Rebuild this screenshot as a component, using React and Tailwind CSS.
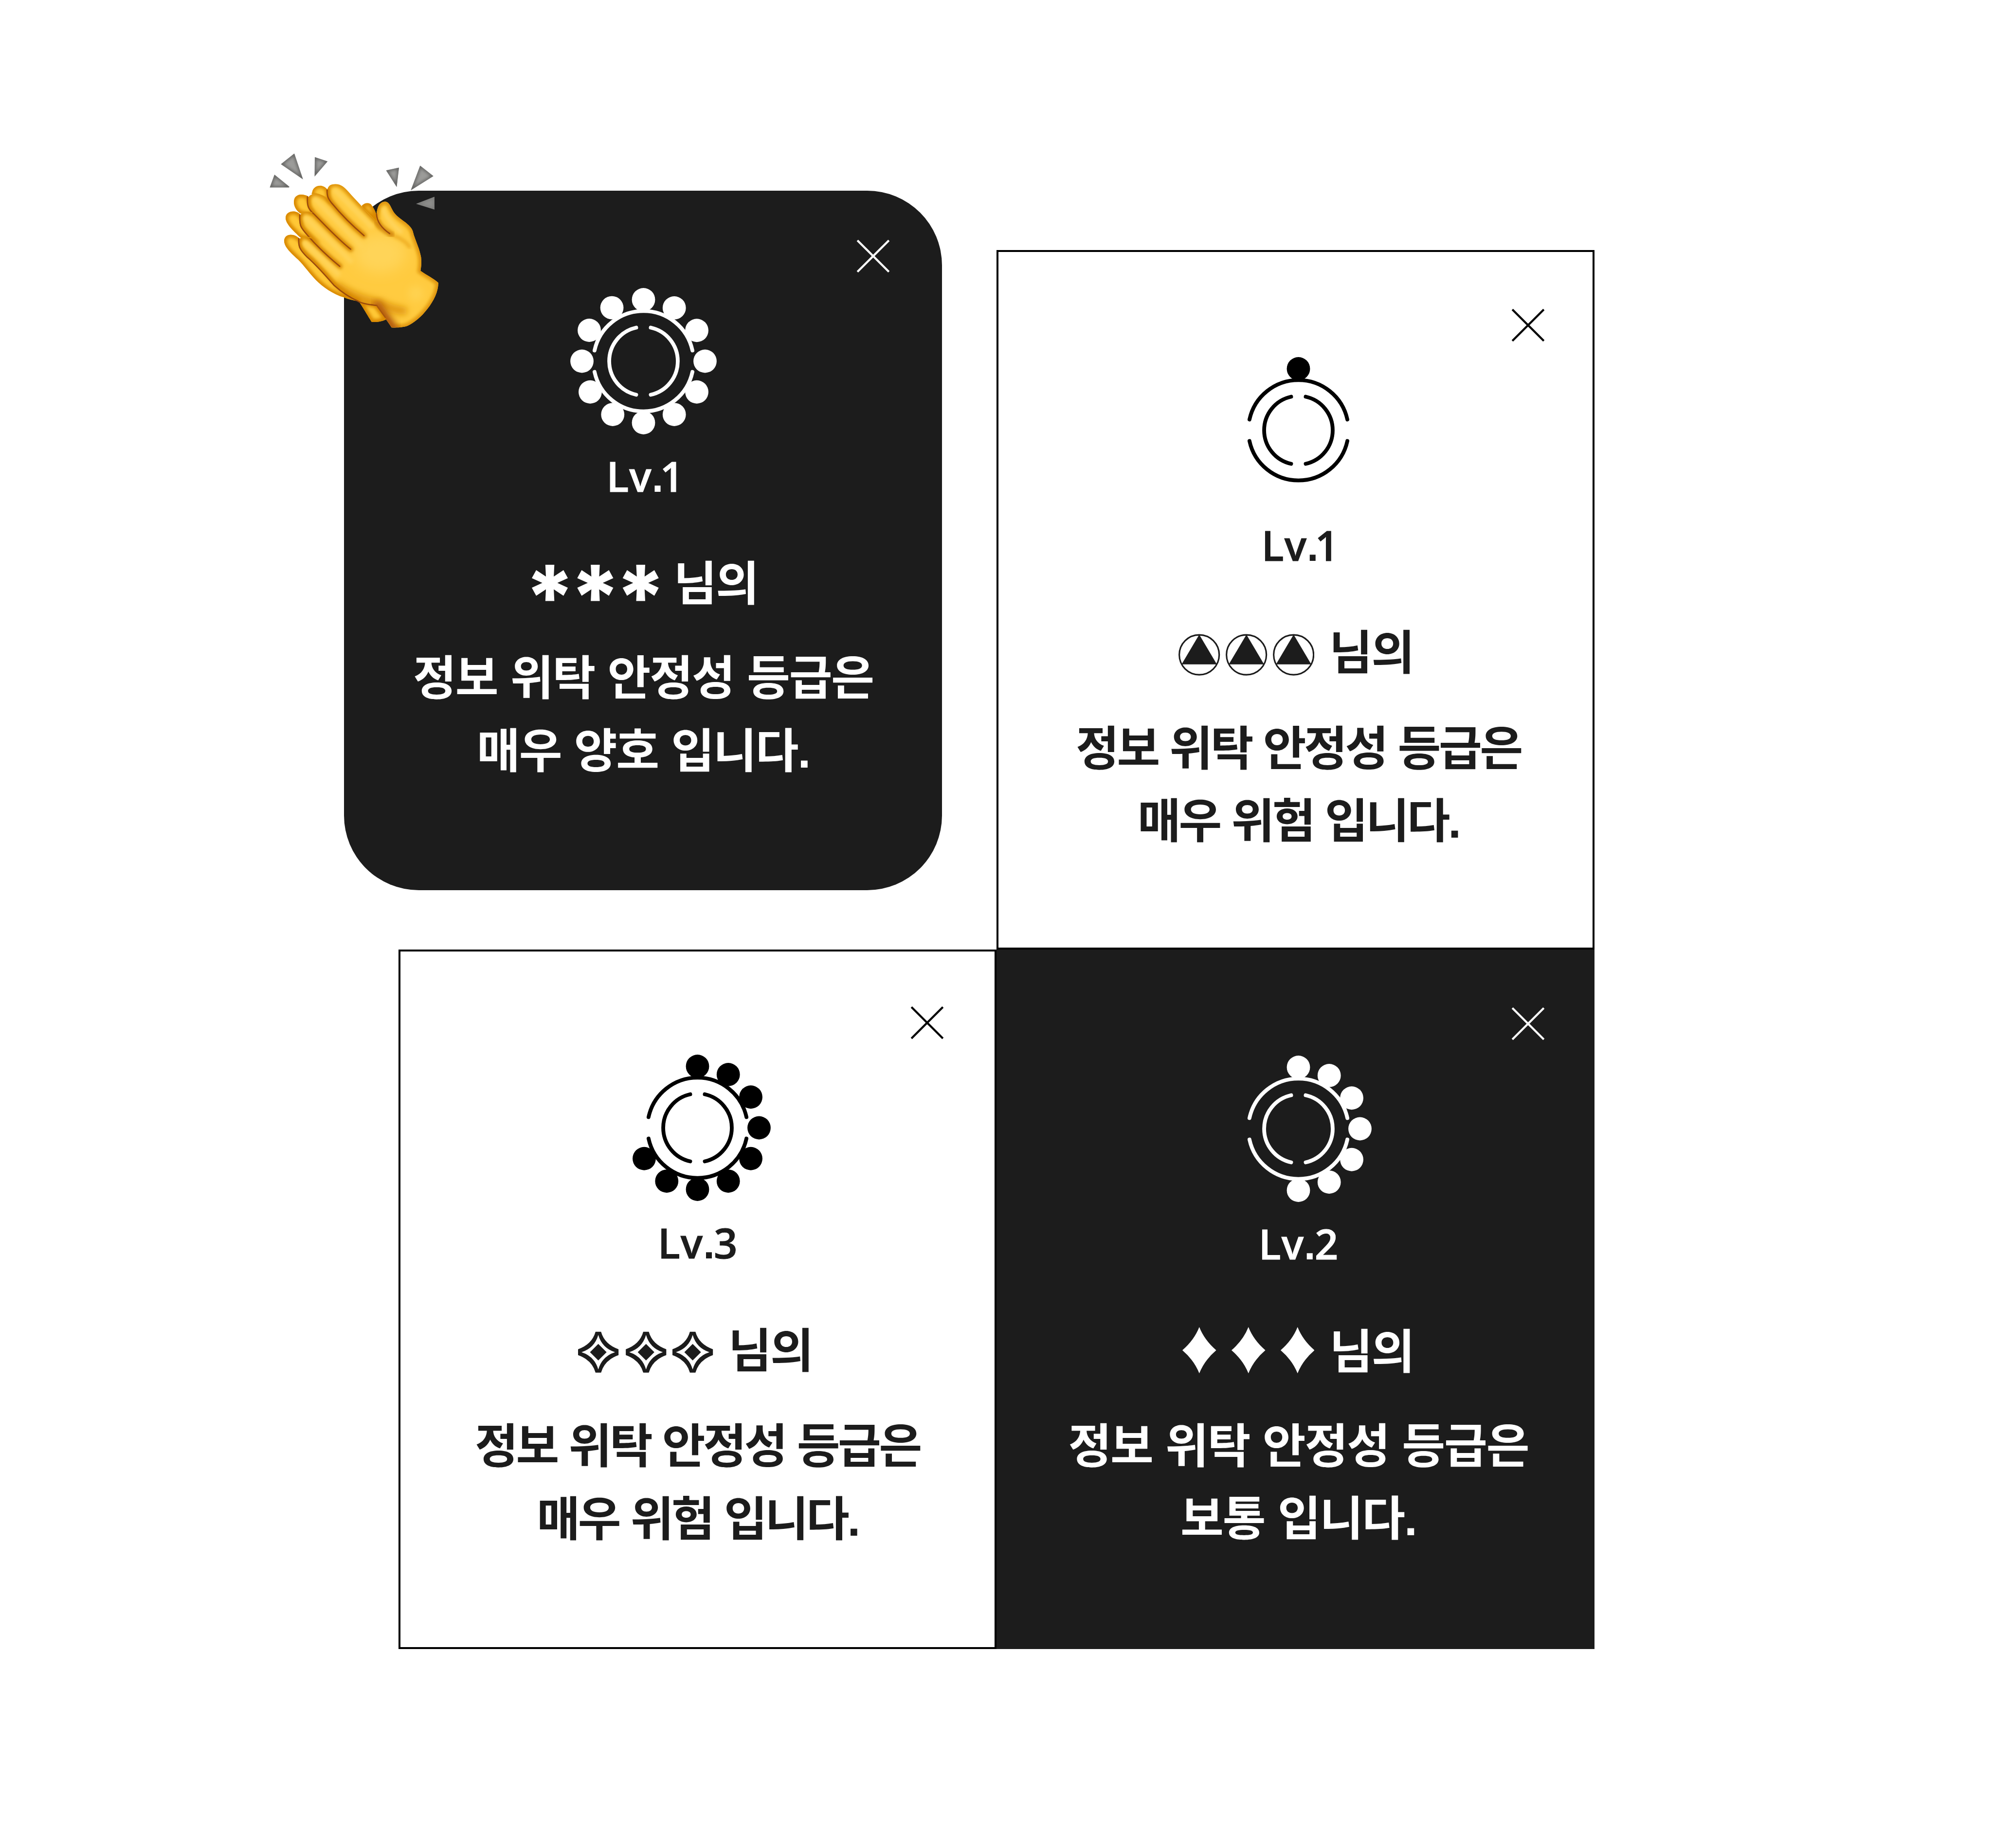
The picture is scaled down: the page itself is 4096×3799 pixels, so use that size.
import React from "react";

const OUTER_R = 144.7;
const INNER_R = 99.3;
const DOT_R = 33.6;
const DOT_ORBIT = 177.8;

const clockDots = (hours) =>
  hours.map((h) => {
    const a = (h * Math.PI) / 6;
    return [DOT_ORBIT * Math.sin(a), -DOT_ORBIT * Math.cos(a)];
  });

function LevelRing({ dots }) {
  return (
    <svg viewBox="-220 -220 440 440" className="block h-[313px] w-[313px] shrink-0" fill="none">
      <g stroke="currentColor" strokeWidth="11" strokeLinecap="round">
        <path d={`M-141.4 -31 A${OUTER_R} ${OUTER_R} 0 0 1 141.4 -31`} />
        <path d={`M-141.4 31 A${OUTER_R} ${OUTER_R} 0 0 0 141.4 31`} />
        <path d={`M-21 -97 A${INNER_R} ${INNER_R} 0 0 0 -21 97`} />
        <path d={`M21 -97 A${INNER_R} ${INNER_R} 0 0 1 21 97`} />
      </g>
      {dots.map(([x, y], i) => (
        <circle key={i} cx={x} cy={y} r={DOT_R} fill="currentColor" />
      ))}
    </svg>
  );
}

function CloseIcon() {
  return (
    <svg viewBox="-50 -50 100 100" className="block h-[71px] w-[71px]" stroke="currentColor" strokeWidth="6">
      <path d="M-45.5 -45.5 L45.5 45.5 M45.5 -45.5 L-45.5 45.5" />
    </svg>
  );
}

function Asterisks() {
  return (
    <svg viewBox="-52.1 -85 366.8 170" className="block h-[120.9px] w-[260.8px] shrink-0" fill="currentColor">
      {[0, 131.3, 262.6].map((x) => (
        <path
          key={x}
          transform={`translate(${x} 8.3)`}
          d="M-13 -52.4 H13 L11.3 -18.4 L39.4 -37.2 L52.1 -13.8 L21.7 0 L52.1 13.8 L39.4 37.2 L11.3 18.4 L13 52.4 H-13 L-11.3 18.4 L-39.4 37.2 L-52.1 13.8 L-21.7 0 L-52.1 -13.8 L-39.4 -37.2 L-11.3 -18.4Z"
        />
      ))}
    </svg>
  );
}

function CircledTriangles() {
  return (
    <svg viewBox="-60 -85 392.6 170" className="block h-[120.9px] w-[279.2px] shrink-0">
      {[0, 136.4, 272.8].map((x) => (
        <g key={x} transform={`translate(${x} 15)`}>
          <circle r="57.7" fill="none" stroke="currentColor" strokeWidth="4.4" />
          <path d="M0 -58.5 L51 27.7 H-51Z" fill="currentColor" />
        </g>
      ))}
    </svg>
  );
}

function OutlinedStars() {
  return (
    <svg viewBox="-58.5 -85 389.8 170" className="block h-[120.9px] w-[277.2px] shrink-0" fill="currentColor">
      {[0, 138, 272.8].map((x) => (
        <g key={x} transform={`translate(${x} 14.5)`}>
          <path
            fillRule="evenodd"
            d="M-8 -59 H8 Q18 -23 58.5 -8.5 V8.5 Q18 23 8 59 H-8 Q-18 23 -58.5 8.5 V-8.5 Q-18 -23 -8 -59Z
               M0 -50 Q-11 -12 -48.5 0 Q-11 12 0 50 Q11 12 48.5 0 Q11 -12 0 -50Z"
          />
          <path d="M0 -23.8 L24 0 L0 23.8 L-24 0Z" />
        </g>
      ))}
    </svg>
  );
}

function Diamonds() {
  return (
    <svg viewBox="-48.9 -85 381.8 170" className="block h-[120.9px] w-[271.5px] shrink-0" fill="currentColor">
      {[0, 142, 284].map((x) => (
        <path
          key={x}
          transform={`translate(${x} 6)`}
          d="M0 -67 Q15 -29 48.9 0 Q15 29 0 67 Q-15 29 -48.9 0 Q-15 -29 0 -67Z"
        />
      ))}
    </svg>
  );
}

function Shaded({ id, d, base = "#ffc836", edge = "#d98804", width = 46 }) {
  return (
    <g>
      <clipPath id={id}>
        <path d={d} />
      </clipPath>
      <path d={d} fill={base} />
      <g clipPath={`url(#${id})`}>
        <path d={d} fill="none" stroke={edge} strokeWidth={width} filter="url(#soft)" />
      </g>
    </g>
  );
}

const FRONT_HAND =
  "M556 470 C550 430 555 385 580 368 C610 352 655 358 680 378 C710 402 725 420 750 450 L820 525 L945 655 C938 610 943 570 952 545 C965 505 1000 488 1025 500 C1052 514 1058 560 1090 595 C1130 640 1205 670 1225 725 C1240 790 1275 850 1290 930 C1296 980 1290 1010 1286 1037 C1330 1070 1380 1090 1425 1130 C1425 1200 1390 1270 1340 1335 C1290 1400 1240 1440 1185 1467 C1150 1480 1100 1482 1060 1480 C1030 1430 980 1370 942 1312 C900 1308 850 1302 800 1275 C740 1250 650 1190 610 1150 C560 1095 500 1025 440 960 C400 925 350 885 335 850 C326 800 335 780 370 775 C395 770 410 775 432 780 C395 745 350 715 343 680 C334 630 340 588 375 580 C400 574 420 576 440 582 C400 545 395 500 412 460 C435 425 500 425 556 470Z";

const CREASES = [
  "M556 405 C555 450 562 470 590 505 C660 590 760 690 845 762",
  "M403 458 C398 530 410 555 450 590 C540 680 640 790 740 868",
  "M343 600 C338 680 350 700 400 755 C480 850 580 940 655 1002",
  "M335 785 C330 850 345 875 400 930 C470 990 540 1070 610 1150 C660 1195 720 1240 800 1275",
];

const HIGHLIGHTS = [
  "M620 410 L900 690",
  "M465 480 L830 850",
  "M390 625 L740 960",
  "M385 820 L640 1060",
];

const SPARKS = [
  "M195 203 L300 120 L368 322Z",
  "M460 148 L560 182 L458 300Z",
  "M145 285 L262 380 L258 386 L108 386Z",
  "M1017 252 L1118 230 L1100 382Z",
  "M1283 215 L1387 297 L1210 408Z",
];

function ClappingHands() {
  return (
    <svg viewBox="0 0 1568 1568" className="absolute -left-[181px] -top-[108px] h-[412.4px] w-[412.4px]">
      <defs>
        <filter id="soft" x="-20%" y="-20%" width="140%" height="140%">
          <feGaussianBlur stdDeviation="13" />
        </filter>
        <filter id="softer" x="-40%" y="-40%" width="180%" height="180%">
          <feGaussianBlur stdDeviation="26" />
        </filter>
        <filter id="softest" x="-60%" y="-60%" width="220%" height="220%">
          <feGaussianBlur stdDeviation="50" />
        </filter>
        <filter id="fine" x="-20%" y="-20%" width="140%" height="140%">
          <feGaussianBlur stdDeviation="2" />
        </filter>
      </defs>

      {SPARKS.map((d, i) => (
        <Shaded key={d} id={`spark${i}`} d={d} base="#9c9c9a" edge="#5c5c5a" width={20} />
      ))}
      <Shaded id="spark5" d="M1252 513 L1395 458 V558Z" base="#8e8e8c" edge="#6f6f6d" width={12} />

      <Shaded id="wristBack" d="M800 1272 L942 1305 L1020 1415 C990 1430 950 1440 905 1437 C880 1400 830 1310 800 1272Z" />
      <Shaded id="thumbBack" d="M828 527 C850 505 885 500 902 522 C930 560 950 600 944 655 L828 545Z" />
      <Shaded id="back1" d="M438 440 C436 390 475 368 510 372 C535 378 548 390 556 400 L575 490 L500 480Z" width={36} />
      <Shaded id="back2" d="M345 587 C300 555 285 500 305 465 C325 435 370 435 408 455 L470 620Z" />
      <Shaded id="back3" d="M345 775 C300 730 240 680 232 630 C228 590 260 570 300 572 C320 575 335 585 345 595 L480 800 Z" />
      <Shaded
        id="back4"
        d="M690 1245 C600 1220 520 1160 470 1110 C420 1060 380 1000 330 950 C270 895 220 850 220 800 C225 760 260 750 290 757 C320 765 335 780 345 790 L640 1150 L800 1275 C760 1268 720 1258 690 1245Z"
      />

      <clipPath id="front">
        <path d={FRONT_HAND} />
      </clipPath>
      <path d={FRONT_HAND} fill="#ffcb40" />
      <g clipPath="url(#front)" fill="none" strokeLinecap="round">
        <ellipse cx="970" cy="900" rx="200" ry="150" fill="#ffd459" filter="url(#softest)" />
        <path d={FRONT_HAND} stroke="#e0960a" strokeWidth="46" filter="url(#soft)" />
        <path d="M640 1160 C760 1240 860 1270 960 1290 C1010 1310 1060 1340 1150 1350" stroke="#e0960a" strokeWidth="64" filter="url(#softer)" />
        <path d="M950 1310 L1080 1500" stroke="#b25a0a" strokeWidth="74" filter="url(#softer)" />
        <path d="M1050 750 C1110 775 1170 800 1200 850" stroke="#efae22" strokeWidth="26" filter="url(#soft)" />
        <path d="M948 655 C975 700 1010 725 1060 752" stroke="#d58a08" strokeWidth="44" filter="url(#soft)" />
        <path d="M1000 560 C1010 620 1070 680 1130 730" stroke="#ffd45c" strokeWidth="34" filter="url(#soft)" />
        <circle cx="1250" cy="1215" r="60" fill="#ffd250" filter="url(#softer)" />
        {CREASES.map((d) => (
          <path key={d} d={d} stroke="#d58606" strokeWidth="42" filter="url(#soft)" />
        ))}
        {HIGHLIGHTS.map((d) => (
          <path key={d} d={d} stroke="#ffd356" strokeWidth="42" filter="url(#soft)" />
        ))}
      </g>
      <g fill="none" stroke="#9a4a0c" strokeWidth="10" strokeLinecap="round" filter="url(#fine)">
        {CREASES.map((d) => (
          <path key={d} d={d} />
        ))}
        <path d="M942 592 C945 650 985 705 1045 746" />
        <path d="M800 1277 C850 1300 900 1302 945 1308" />
        <path d="M945 1310 L1010 1400" stroke="#a9560c" />
      </g>
      <g fill="none" stroke="#dd960e" strokeWidth="7" filter="url(#fine)">
        <path d="M435 432 C480 430 520 445 556 472" />
        <path d="M835 545 C860 580 900 620 942 655" />
        <path d="M350 585 C380 575 410 575 440 583" />
        <path d="M350 780 C380 770 410 772 435 782" />
      </g>
    </svg>
  );
}

const TIGHT = "tracking-[-4.4px] [word-spacing:5.9px]";
const NORMAL = "tracking-[-2.15px] [word-spacing:6.5px]";

function ResultCard({ card }) {
  return (
    <section className={`relative flex h-[1437.9px] w-[1228.8px] shrink-0 flex-col items-center ${card.frame}`}>
      <header className={`flex w-full shrink-0 justify-end ${card.header}`}>
        <button type="button" aria-label="닫기" className="block">
          <CloseIcon />
        </button>
      </header>
      <div className={`flex w-full flex-col items-center ${card.shift} ${card.ink}`}>
        <div className={`mt-6 ${card.ringInk}`}>
          <LevelRing dots={card.dots} />
        </div>
        <div className="mt-[37px] flex h-[85px] items-baseline font-['Open_Sans',sans-serif] text-[85px] leading-[85px] font-semibold whitespace-nowrap [-webkit-text-stroke:1px_currentColor]">
          <span className="tracking-[1px]">Lv</span>
          <span className={`font-['Liberation_Sans',sans-serif] font-bold [-webkit-text-stroke:0] ${card.dot}`}>.</span>
          <span className={card.digit}>{card.level}</span>
        </div>
        <div className={`mt-[123.4px] flex h-[97px] items-center gap-[31px] self-start ${card.title}`}>
          {card.symbols}
          <span className="text-[96.6px] leading-[97px] font-bold tracking-[-2.2px] whitespace-nowrap">님의</span>
        </div>
        <p className={`${card.bodyGap} h-[97px] text-[96.6px] leading-[97px] font-bold whitespace-nowrap ${card.spacing}`}>
          정보 위탁 안정성 등급은
        </p>
        <p className={`mt-[52.4px] h-[97px] text-[96.6px] leading-[97px] font-bold whitespace-nowrap ${card.spacing}`}>
          {card.grade} 입니다
          <span className="font-['Liberation_Sans',sans-serif] leading-none">.</span>
        </p>
      </div>
    </section>
  );
}

const excellent = {
  frame: "ml-[707.2px] rounded-[153.6px] bg-[#1c1c1c]",
  header: "pt-[98.7px] pr-[106px] text-white",
  shift: "pl-px",
  ink: "text-white",
  ringInk: "text-white",
  dots: [...clockDots([0, 1, 2, 3, 4, 5, 6, 7, 8, 9]), [-156.7, -89.3], [-91.3, -154.5]],
  level: 1,
  dot: "tracking-[-7px]",
  digit: "-mr-[7px]",
  title: "ml-[384.6px]",
  symbols: <Asterisks />,
  bodyGap: "mt-[97.3px]",
  spacing: NORMAL,
  grade: "매우 양호",
};

const severe = {
  frame: "border-4 border-black bg-white",
  header: "pt-[115px] pr-[97px] text-black",
  shift: "pl-[12px]",
  ink: "text-[#1c1c1c]",
  ringInk: "text-black",
  dots: clockDots([0]),
  level: 1,
  dot: "tracking-[-7px]",
  digit: "-mr-[7px]",
  title: "ml-[357.6px]",
  symbols: <CircledTriangles />,
  bodyGap: "mt-[99.5px]",
  spacing: TIGHT,
  grade: "매우 위험",
};

const risky = {
  frame: "ml-[819.2px] border-4 border-black bg-white",
  header: "pt-[111.4px] pr-[102.7px] text-black",
  shift: "",
  ink: "text-[#1c1c1c]",
  ringInk: "text-black",
  dots: clockDots([0, 1, 2, 3, 4, 5, 6, 7, 8]),
  level: 3,
  dot: "tracking-[-2px]",
  digit: "",
  title: "ml-[365.3px]",
  symbols: <OutlinedStars />,
  bodyGap: "mt-[99.5px]",
  spacing: TIGHT,
  grade: "매우 위험",
};

const average = {
  frame: "bg-[#1c1c1c]",
  header: "pt-[117.3px] pr-[100.5px] text-white",
  shift: "pl-[12px]",
  ink: "text-white",
  ringInk: "text-white",
  dots: clockDots([0, 1, 2, 3, 4, 5, 6]),
  level: 2,
  dot: "tracking-[-2px]",
  digit: "",
  title: "ml-[369.7px]",
  symbols: <Diamonds />,
  bodyGap: "mt-[97.3px]",
  spacing: NORMAL,
  grade: "보통",
};

export default function App() {
  return (
    <main className="flex h-[3799px] w-[4096px] overflow-hidden bg-white font-['Noto_Sans_CJK_KR',sans-serif]">
      <div className="flex w-[2048px] shrink-0 flex-col gap-[122px] pt-[392.1px]">
        <div className="relative">
          <ResultCard card={excellent} />
          <div className="absolute top-0 left-[707.2px]">
            <ClappingHands />
          </div>
        </div>
        <ResultCard card={risky} />
      </div>
      <div className="flex w-[2048px] shrink-0 flex-col pt-[514.1px]">
        <ResultCard card={severe} />
        <ResultCard card={average} />
      </div>
    </main>
  );
}
